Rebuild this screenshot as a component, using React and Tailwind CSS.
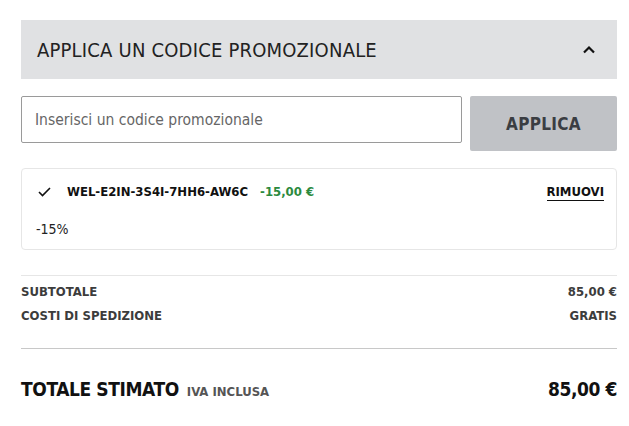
import React from "react";

const F = { fontFamily: '"DejaVu Sans Condensed", "Liberation Sans Narrow", "Roboto", sans-serif' };

export default function App() {
  return (
    <div className="w-[629px] h-[426px] bg-white overflow-hidden" style={F}>
      <div className="ml-[21px] w-[596px] pt-[20px]">
        <div className="h-[59px] bg-[#e0e1e3] flex items-center justify-between pl-[16px] pr-[21px]">
          <span className="text-[20px] text-[#222] tracking-[0.2px]">APPLICA UN CODICE PROMOZIONALE</span>
          <svg width="14" height="9" viewBox="0 0 14 9" fill="none">
            <path d="M2 7.5L7 2.5L12 7.5" stroke="#111" strokeWidth="2.2" />
          </svg>
        </div>
        <div className="mt-[17px] flex gap-[8px] items-start">
          <div className="w-[441px] h-[47px] border border-[#9a9a9a] rounded-[2px] flex items-center pl-[13px] pt-[3px]">
            <span className="text-[15.5px] text-[#666]">Inserisci un codice promozionale</span>
          </div>
          <div className="w-[147px] h-[55px] bg-[#c0c2c6] rounded-[2px] flex items-center justify-center pt-[3px]">
            <span className="text-[17px] font-bold text-[#3a3d42] tracking-[0.3px]">APPLICA</span>
          </div>
        </div>
        <div className="mt-[17px] h-[82px] border border-[#e6e6e6] rounded-[4px] pl-[14px] pr-[12px] pt-[13px]">
          <div className="flex items-center h-[20px]">
            <svg width="13" height="10" viewBox="0 0 13 10" fill="none" className="ml-[2px]">
              <path d="M1 5L4.5 8.5L12 1" stroke="#111" strokeWidth="1.6" />
            </svg>
            <span className="ml-[16px] text-[13px] font-bold text-[#111]">WEL-E2IN-3S4I-7HH6-AW6C</span>
            <span className="ml-[12px] text-[13px] font-bold text-[#2b8a3e]">-15,00 €</span>
            <span className="ml-auto text-[13px] font-bold text-[#111] border-b border-[#111] leading-[17px]">RIMUOVI</span>
          </div>
          <div className="mt-[17px] text-[14px] text-[#222]">-15%</div>
        </div>
        <div className="mt-[25px] border-t border-[#e6e6e6] pt-[4px]">
          <div className="flex justify-between h-[24px] items-center text-[13px] font-bold text-[#3c3c3c]">
            <span>SUBTOTALE</span>
            <span>85,00 €</span>
          </div>
          <div className="flex justify-between h-[24px] items-center text-[13px] font-bold text-[#3c3c3c]">
            <span>COSTI DI SPEDIZIONE</span>
            <span>GRATIS</span>
          </div>
        </div>
        <div className="mt-[20px] border-t border-[#c8c8c8] pt-[26px] flex justify-between items-baseline">
          <div className="flex items-baseline">
            <span className="text-[19px] font-bold text-[#111] tracking-[-0.4px]">TOTALE STIMATO</span>
            <span className="ml-[8px] text-[13px] font-bold text-[#555]">IVA INCLUSA</span>
          </div>
          <span className="text-[19px] font-bold text-[#111] tracking-[-0.4px]">85,00 €</span>
        </div>
      </div>
    </div>
  );
}
